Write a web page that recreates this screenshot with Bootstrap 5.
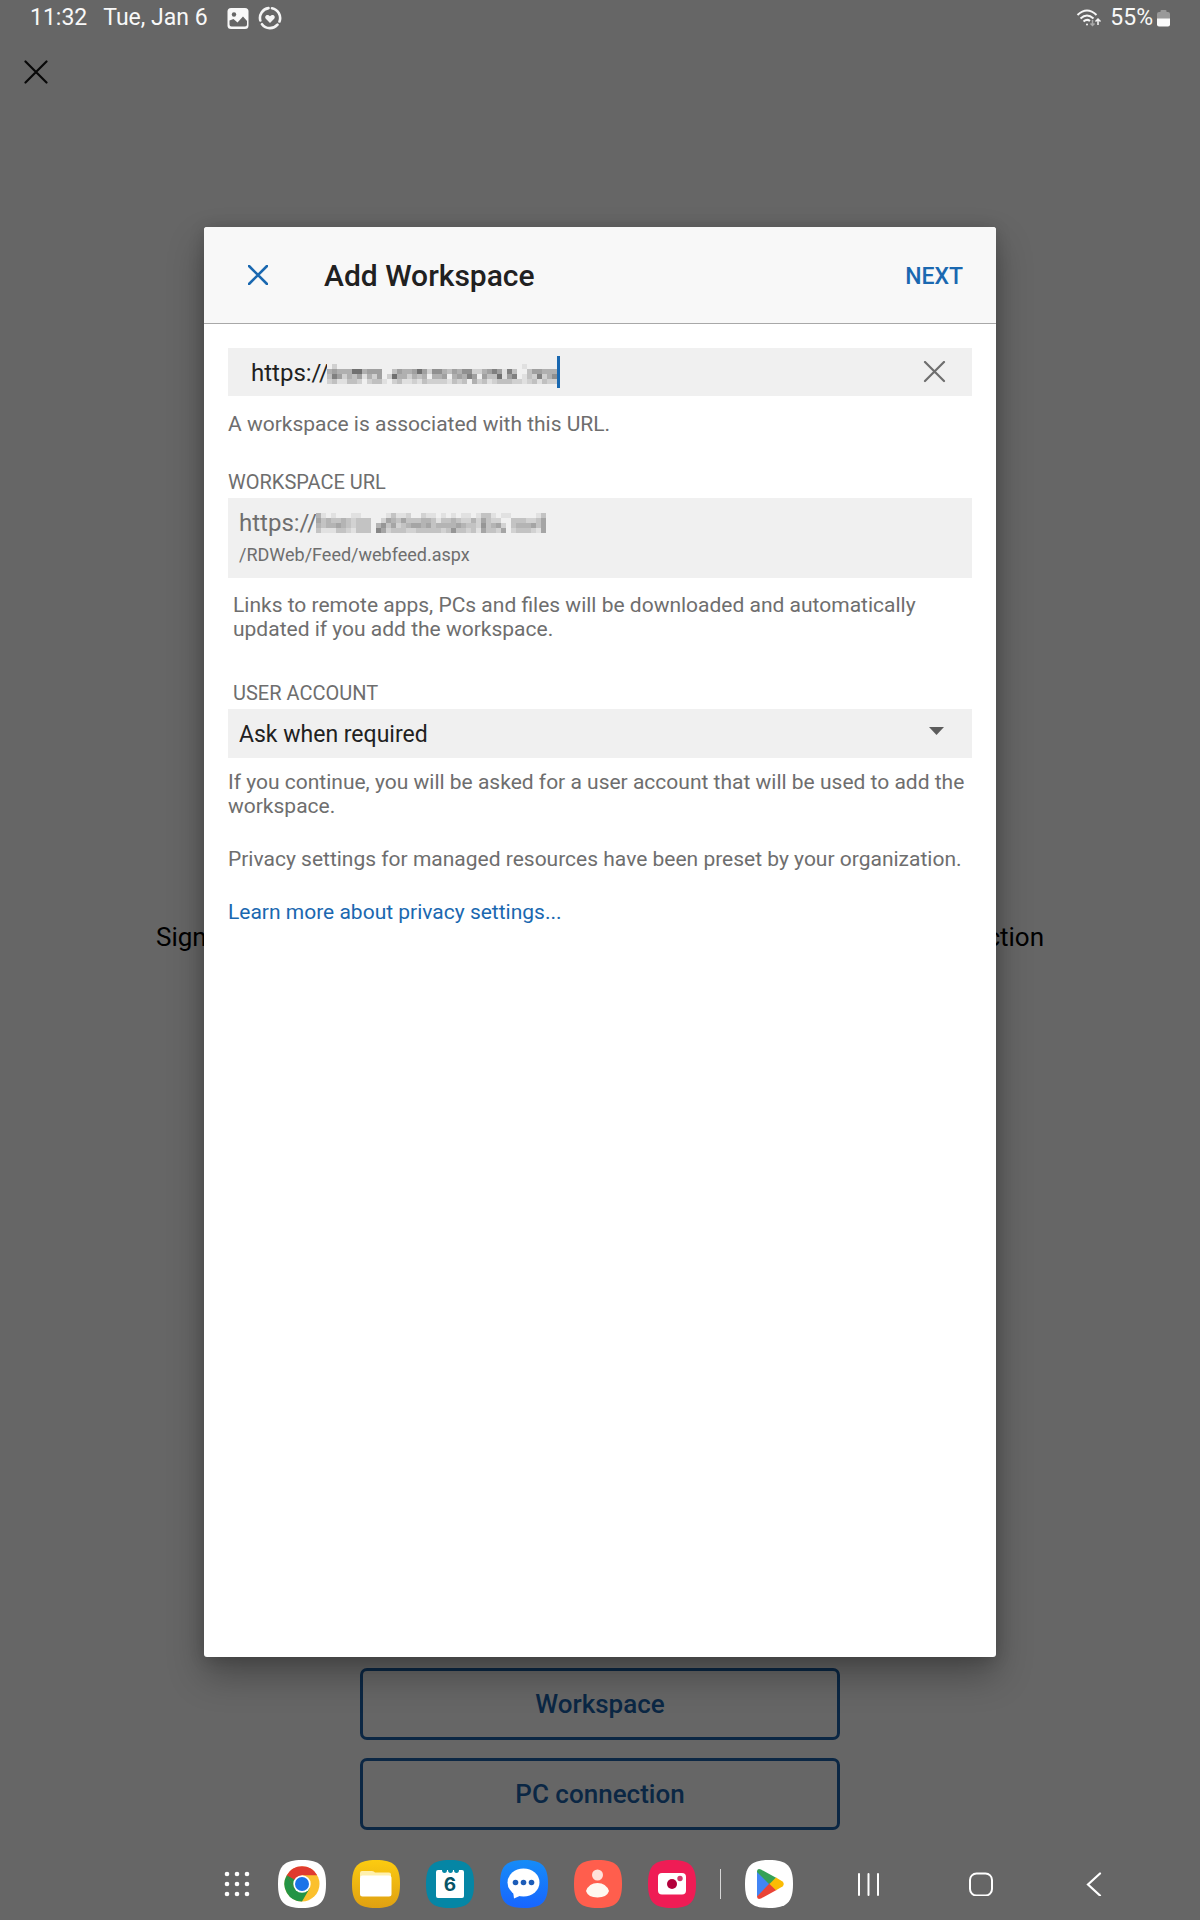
<!DOCTYPE html>
<html lang="en">
<head>
<meta charset="utf-8">
<meta name="viewport" content="width=device-width, initial-scale=1">
<title>Add Workspace</title>
<link href="https://cdn.jsdelivr.net/npm/bootstrap@5.3.0/dist/css/bootstrap.min.css" rel="stylesheet">
<style>
body{background:#666;font-family:Roboto,"Liberation Sans",sans-serif;color:#000}
svg{display:block;flex:none}
button{font-family:inherit}
.bare{background:none;border:0;padding:0;display:flex;align-items:center;justify-content:center}
.status{height:36px;padding:0 30px 0 30px;font-size:23px;line-height:36px;color:#f8f8f8}
.status .day{margin:0 2px 0 16px}
.closebar{height:170px;padding:24px 24px}
.hero{width:74%;font-size:26px;line-height:36px}
.choices{gap:18px;margin-bottom:18px}
.choice{width:40%;height:72px;border:3px solid #0b2744;border-radius:7px;color:#0b2744;font-size:26px;font-weight:500}
.choice:hover{color:#0b2744;border-color:#0b2744}
.dock{height:72px;padding-right:50px}
.cell-grid{width:56px}.cell-app{width:74px}.cell-rule{width:23px}.cell-nav{width:113px}
.nav-first{margin-left:5px}
.veil{padding:227px 0 263px}
.sheet{width:66%;background:#fff;border-radius:3px;box-shadow:0 18px 36px rgba(0,0,0,.3),0 2px 16px rgba(0,0,0,.16)}
.sheet-head{height:97px;background:#f8f8f8;border-bottom:1px solid #a8a8a8;border-radius:3px 3px 0 0;padding:0 33px 0 44px}
.sheet-head h1{font-size:30px;line-height:36px;font-weight:500;color:#212121;margin:2px 0 0 56px}
.next{color:#1a68b0;font-size:23px;font-weight:500;line-height:28px;padding-top:4px}
.sheet-body{padding:24px;font-size:21px;line-height:24px;color:#6e6e6e}
.panel{background:#f0f0f0}
.field{height:48px;padding:0 23px}
.field input{border:0;background:none;outline:0;padding:2px 0 0;font-size:24px;color:#212121;height:48px;min-width:0}
.overlay1{left:99px;top:4px}
.caret{left:329px;top:8px}
.lbl{font-size:20px;line-height:24px;display:block;margin-bottom:4px}
.sect{margin-top:34px}
.sect-acct{margin-top:40px}
.note{margin-top:15px}
.follow{margin-top:12px}
.para{margin-top:29px}
.inset{padding-left:5px}
.urlbox{height:80px;padding:11px 11px 0}
.urlbox .host{font-size:24px;line-height:28px}
.urlbox .path{font-size:18px;line-height:24px;margin-top:6px}
.overlay2{left:88px;top:14px}
.account{appearance:none;border:0;width:100%;height:49px;padding:2px 11px 0;background:#f0f0f0;color:#212121;font-size:23px;border-radius:0;display:block}
.arrow{right:28px;top:18px}
.sheet-body a{color:#1a68b0;text-decoration:none}
</style>
</head>
<body>
<div class="d-flex flex-column min-vh-100 position-relative">
  <header class="status d-flex align-items-center">
    <span>11:32</span><span class="day">Tue, Jan 6</span>
    <svg class="ms-3" width="24" height="24" viewBox="0 0 24 24"><rect x="1.500" y="2" width="21" height="21" rx="3.500" fill="#f8f8f8"/><circle cx="8" cy="8.500" r="2.200" fill="#666"/><path d="M3.500 18.500v-4l4-1.500 4 3.500 5.500-6 4 4.500v3.500q0 2-2 2h-13.500q-2 0-2-2z" fill="#666"/></svg>
    <svg class="ms-2" width="24" height="24" viewBox="0 0 24 24" fill="none" stroke="#f4f4f4" stroke-width="2.600" stroke-linecap="round"><path d="M14 2.200A10 10 0 0 1 21.500 15.500M19.500 18.700A10 10 0 0 1 4 18.200M2.300 14.500A10 10 0 0 1 10.500 2.100"/><path d="M12 17l-4.200-4.200c-2-2.300 1.500-5.500 4.200-2.500 2.700-3 6.200.2 4.200 2.500z" fill="#f4f4f4" stroke="none"/></svg>
    <svg class="ms-auto" width="26" height="20" viewBox="0 0 26 20" fill="none" stroke="#f6f6f6" stroke-width="2"><path d="M1.500 7Q11 -2 20.500 7M4.500 10.500Q11 4.500 17.500 10.500M7.500 13.500Q11 10.500 14 13"/><circle cx="11" cy="16.500" r="1" fill="#f6f6f6" stroke="none"/><path d="M16.500 12v5M14.500 15.500l2 2 2-2" stroke="#aaa" stroke-width="1.500"/><path d="M22 17v-5M19.500 13.500l2.500-2.500 2.500 2.500" stroke-width="1.500"/></svg>
    <span class="ms-2">55%</span>
    <svg class="ms-1" width="13" height="17" viewBox="0 0 13 17"><path d="M3.500 2V1q0-1 1-1h4q1 0 1 1v1h1.500q2 0 2 2v5H0V4q0-2 2-2z" fill="#999"/><path d="M0 8.500h13v6q0 2-2 2H2q-2 0-2-2z" fill="#fafafa"/></svg>
  </header>
  <div class="closebar">
    <button class="bare" aria-label="Close"><svg width="24" height="24" viewBox="0 0 24 24" stroke="#080808" stroke-width="2.200" stroke-linecap="round"><path d="M1.500 1.500l21 21M22.500 1.500l-21 21"/></svg></button>
  </div>
  <main class="flex-grow-1 d-flex align-items-center justify-content-center">
    <div class="hero d-flex justify-content-between"><span>Sign</span><span>ction</span></div>
  </main>
  <div class="choices d-flex flex-column align-items-center">
    <button class="btn choice">Workspace</button>
    <button class="btn choice">PC connection</button>
  </div>
  <footer class="dock d-flex align-items-center justify-content-end">
    <button class="bare cell-grid" aria-label="All apps"><svg width="26" height="26" viewBox="0 0 26 26" fill="#fff"><circle cx="3" cy="3" r="2.300"/><circle cx="13" cy="3" r="2.300"/><circle cx="23" cy="3" r="2.300"/><circle cx="3" cy="13" r="2.300"/><circle cx="13" cy="13" r="2.300"/><circle cx="23" cy="13" r="2.300"/><circle cx="3" cy="23" r="2.300"/><circle cx="13" cy="23" r="2.300"/><circle cx="23" cy="23" r="2.300"/></svg></button>
    <button class="bare cell-app" aria-label="Chrome"><svg width="48" height="48" viewBox="0 0 48 48"><path d="M24 0C42 0 48 6 48 24S42 48 24 48 0 42 0 24 6 0 24 0z" fill="#fff"/><circle cx="24" cy="24" r="17.500" fill="#fbc02d"/><path d="M24 24L31.600 28.400 24 41.500A17.500 17.500 0 0 1 8.800 15.200z" fill="#249445"/><path d="M24 24L16.400 28.400 8.800 15.200A17.500 17.500 0 0 1 39.200 15.200H24z" fill="#e03a2f"/><path d="M8.800 15.200L16.400 28.400 24 24z" fill="#249445"/><circle cx="24" cy="24" r="8.700" fill="#fff"/><circle cx="24" cy="24" r="7" fill="#1a73e8"/></svg></button>
    <button class="bare cell-app" aria-label="My Files"><svg width="48" height="48" viewBox="0 0 48 48"><defs><linearGradient id="gf" x2="0" y2="1"><stop stop-color="#fccb10"/><stop offset="1" stop-color="#dfa012"/></linearGradient></defs><path d="M24 0C42 0 48 6 48 24S42 48 24 48 0 42 0 24 6 0 24 0z" fill="url(#gf)"/><path d="M8 17v-4q0-2 2-2h10q2 0 3 1.500h14q2 0 2 2V17z" fill="#fff0ad"/><rect x="8" y="15.500" width="31.500" height="21" rx="2.500" fill="#fff"/></svg></button>
    <button class="bare cell-app" aria-label="Calendar"><svg width="48" height="48" viewBox="0 0 48 48"><path d="M24 0C42 0 48 6 48 24S42 48 24 48 0 42 0 24 6 0 24 0z" fill="#0586a5"/><path d="M12 10h4q0 3 2.500 3t2.500-3h1q0 3 2.500 3t2.500-3h1q0 3 2.500 3t2.500-3h3q2 0 2 2v24q0 2-2 2H12q-2 0-2-2V12q0-2 2-2z" fill="#fff"/><text x="24" y="31" text-anchor="middle" font-family="Inter" font-size="19" font-weight="700" fill="#075466">6</text></svg></button>
    <button class="bare cell-app" aria-label="Messages"><svg width="48" height="48" viewBox="0 0 48 48"><defs><linearGradient id="gm" x2="0" y2="1"><stop stop-color="#168cf7"/><stop offset="1" stop-color="#1765ff"/></linearGradient></defs><path d="M24 0C42 0 48 6 48 24S42 48 24 48 0 42 0 24 6 0 24 0z" fill="url(#gm)"/><ellipse cx="23.500" cy="22.500" rx="16" ry="14" fill="#fff"/><path d="M13 31l1 7.500 9-4z" fill="#fff"/><g fill="#1c5cb8"><circle cx="15.500" cy="22.500" r="2.800"/><circle cx="23.500" cy="22.500" r="2.800"/><circle cx="31.500" cy="22.500" r="2.800"/></g></svg></button>
    <button class="bare cell-app" aria-label="Contacts"><svg width="48" height="48" viewBox="0 0 48 48"><path d="M24 0C42 0 48 6 48 24S42 48 24 48 0 42 0 24 6 0 24 0z" fill="#ff5e4d"/><circle cx="23.500" cy="15" r="5.500" fill="#ffe1da"/><path d="M12 31q3-8 11.500-8T35 31q-2 6.500-11.500 6.500T12 31z" fill="#fff8f0"/></svg></button>
    <button class="bare cell-app" aria-label="Camera"><svg width="48" height="48" viewBox="0 0 48 48"><path d="M24 0C42 0 48 6 48 24S42 48 24 48 0 42 0 24 6 0 24 0z" fill="#ef1c55"/><rect x="10" y="13" width="28" height="21.500" rx="4" fill="#fff"/><circle cx="24" cy="24" r="5" fill="#b3003b"/><circle cx="32" cy="18.500" r="2.700" fill="#d0396b"/></svg></button>
    <div class="cell-rule d-flex justify-content-center"><svg width="2" height="30"><rect width="1" height="30" fill="#d5d5d5"/></svg></div>
    <button class="bare cell-app" aria-label="Play Store"><svg width="48" height="48" viewBox="0 0 48 48"><path d="M24 0C42 0 48 6 48 24S42 48 24 48 0 42 0 24 6 0 24 0z" fill="#fff"/><path d="M12 11v26l13.500-13z" fill="#4285f4"/><path d="M12 12q0-4 4-2.500L31.500 18l-6.500 7L12 12z" fill="#34a156"/><path d="M12 36.500q0 3.500 4 2L31.500 30 25 23z" fill="#ea4335"/><path d="M31 17.500l6.500 4q2.500 2.500 0 5L31 30.300 24.500 24z" fill="#fbbc04"/></svg></button>
    <button class="bare cell-nav nav-first" aria-label="Recents"><svg width="24" height="24" viewBox="0 0 24 24" stroke="#fff" stroke-width="2" stroke-linecap="round"><path d="M3 2v21M12.500 2v21M22 2v21"/></svg></button>
    <button class="bare cell-nav" aria-label="Home"><svg width="24" height="24" viewBox="0 0 24 24" fill="none" stroke="#fff" stroke-width="2"><rect x="1" y="1.500" width="22" height="22" rx="6.500"/></svg></button>
    <button class="bare cell-nav" aria-label="Back"><svg width="24" height="24" viewBox="0 0 24 24" fill="none" stroke="#fff" stroke-width="2.200" stroke-linecap="round"><path d="M18 1.500L6 12.500 18 23.500"/></svg></button>
  </footer>

  <div class="veil position-absolute top-0 start-0 w-100 h-100 d-flex justify-content-center">
    <section class="sheet d-flex flex-column" role="dialog" aria-labelledby="ttl">
      <div class="sheet-head d-flex align-items-center">
        <button class="bare" aria-label="Cancel"><svg width="20" height="20" viewBox="0 0 20 20" stroke="#1a68b0" stroke-width="2.600" stroke-linecap="round"><path d="M1 1l18 18M19 1L1 19"/></svg></button>
        <h1 id="ttl">Add Workspace</h1>
        <button class="bare next ms-auto">NEXT</button>
      </div>
      <div class="sheet-body">
        <div class="panel field d-flex align-items-center position-relative">
          <input class="flex-grow-1" type="text" value="https://" aria-label="Workspace address">
          <svg class="overlay1 position-absolute mosaic" width="230" height="40" data-top="12" data-tone="16" data-rows="0200000000000000000000000000000000000001000000|4544488455500354458526643546622457517300355444|3752435142502844243404450454750533815701327246|2311332023310231121322221323042312333221231322"></svg>
          <svg class="caret position-absolute" width="3" height="32"><rect width="3" height="32" fill="#1a68b0"/></svg>
          <button class="bare" aria-label="Clear"><svg width="26" height="22" viewBox="0 0 26 22" stroke="#6e6e6e" stroke-width="2.200" stroke-linecap="round"><path d="M2 1l19 19M21 1L2 20"/></svg></button>
        </div>
        <p class="mt-3 mb-0">A workspace is associated with this URL.</p>
        <div class="lbl sect">WORKSPACE URL</div>
        <div class="panel urlbox position-relative">
          <div class="host">https://</div>
          <svg class="overlay2 position-absolute mosaic" width="230" height="24" data-top="1" data-tone="15" data-rows="4101000110000013112002110101011013310110000013|5343343233300254353334431334322425322003332235|4344543233304635234554534444543326345203444535|3111332133307523332233333236332315332502333215"></svg>
          <div class="path">/RDWeb/Feed/webfeed.aspx</div>
        </div>
        <p class="inset note mb-0">Links to remote apps, PCs and files will be downloaded and automatically updated if you add the workspace.</p>
        <label class="lbl inset sect-acct" for="acct">USER ACCOUNT</label>
        <div class="position-relative">
          <select id="acct" class="account"><option>Ask when required</option></select>
          <svg class="arrow position-absolute pe-none" width="15" height="8"><path d="M0 0h15L7.500 8z" fill="#5c5c5c"/></svg>
        </div>
        <p class="follow mb-0">If you continue, you will be asked for a user account that will be used to add the workspace.</p>
        <p class="para mb-0">Privacy settings for managed resources have been preset by your organization.</p>
        <p class="para mb-0"><a href="#">Learn more about privacy settings...</a></p>
      </div>
    </section>
  </div>
</div>
<script>
// Each digit is the darkness of one 5px censor block.
document.querySelectorAll('.mosaic').forEach(function(svg){
  var tone=+svg.dataset.tone, top=+svg.dataset.top;
  svg.dataset.rows.split('|').forEach(function(row,y){
    row.split('').forEach(function(d,x){
      var g=240-d*tone, r=document.createElementNS('http://www.w3.org/2000/svg','rect');
      r.setAttribute('x',x*5);
      r.setAttribute('y',top+y*5);
      r.setAttribute('width',5);
      r.setAttribute('height',5);
      r.setAttribute('fill','rgb('+g+','+g+','+g+')');
      svg.appendChild(r);
    });
  });
});
</script>
<script src="https://cdn.jsdelivr.net/npm/bootstrap@5.3.0/dist/js/bootstrap.bundle.min.js"></script>
</body>
</html>
